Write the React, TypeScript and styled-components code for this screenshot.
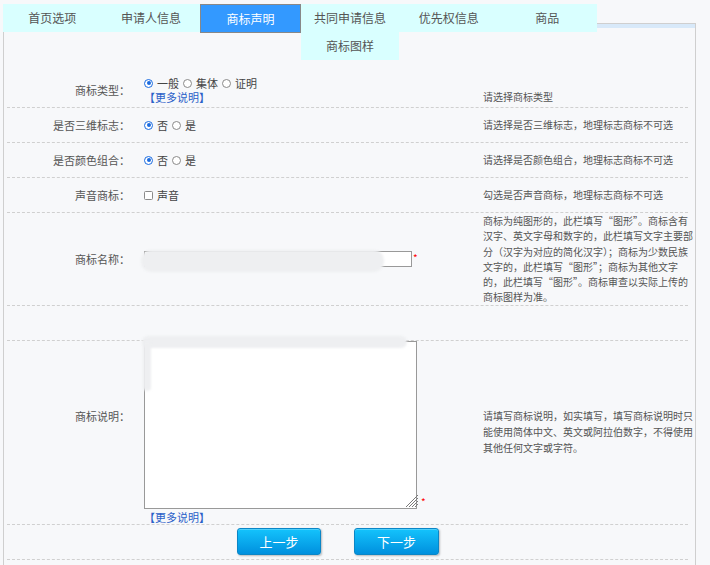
import React from 'react';
import styled, { createGlobalStyle, css } from 'styled-components';

const GlobalStyle = createGlobalStyle`
  html, body { margin: 0; padding: 0; background: #f7f8fa; }
  body { font-family: "Noto Sans CJK SC", "Noto Sans", sans-serif; color: #555; }
  * { box-sizing: border-box; }
`;

const Page = styled.div`
  padding: 4px 0 0 3px;
  width: 710px;
  height: 565px;
  overflow: hidden;
`;

const TabBar = styled.ul`
  list-style: none;
  margin: 0;
  padding: 0;
  width: 594px;
  height: 19px;
  position: relative;
  z-index: 2;
`;

const Tab = styled.li<{ $active?: boolean }>`
  float: left;
  width: 98.6px;
  height: 28px;
  line-height: 28px;
  text-align: center;
  font-size: 12px;
  color: #555;
  background: #d9ffff;
  ${p =>
    p.$active &&
    css`
      box-sizing: content-box;
      height: 27px;
      line-height: 27px;
      border: 1px solid #888;
      background: #3399ff;
      color: #fff;
    `}
`;

const Panel = styled.div`
  width: 693px;
  min-height: 560px;
  border: 1px solid #cfcfcf;
  box-shadow: inset 0 4px 0 #d8e9f9;
  background: #f7f8fa;
  padding: 49px 0 0 3px;
`;

const Row = styled.div`
  width: 681px;
  display: grid;
  grid-template-columns: 130px 332px 205px;
  column-gap: 7px;
  min-height: 35px;
  align-items: center;
  border-bottom: 1px dashed #d0d0d0;
`;

const Label = styled.div<{ $top?: number }>`
  text-align: right;
  padding-right: 7px;
  font-size: 11px;
  line-height: 14px;
  color: #555;
  ${p =>
    p.$top !== undefined &&
    css`
      align-self: start;
      margin-top: ${p.$top}px;
    `}
`;

const Control = styled.div<{ $top?: boolean }>`
  display: flex;
  flex-direction: column;
  align-items: flex-start;
  font-size: 11px;
  line-height: 14px;
  color: #444;
  ${p =>
    p.$top &&
    css`
      align-self: start;
    `}
`;

const Hint = styled.div<{ $lh?: number; $bottom?: boolean }>`
  width: 211px;
  font-size: 10px;
  line-height: ${p => p.$lh ?? 16}px;
  color: #555;
  ${p =>
    p.$bottom &&
    css`
      align-self: end;
      padding-bottom: 3px;
      line-height: 14px;
    `}
`;

const Choices = styled.div`
  display: flex;
  align-items: center;
  height: 14px;
`;

const Choice = styled.label`
  display: inline-flex;
  align-items: center;
  margin-right: 4px;
`;

const Radio = styled.span<{ $checked?: boolean }>`
  display: inline-block;
  position: relative;
  width: 9px;
  height: 9px;
  margin-right: 4px;
  border-radius: 50%;
  border: 1px solid ${p => (p.$checked ? '#1a6be0' : '#8a8a8a')};
  background: #fff;
  ${p =>
    p.$checked &&
    css`
      &::after {
        content: '';
        position: absolute;
        inset: 1.5px;
        border-radius: 50%;
        background: #1a6be0;
      }
    `}
`;

const Check = styled.span`
  display: inline-block;
  width: 9px;
  height: 9px;
  margin-right: 4px;
  border: 1px solid #8a8a8a;
  border-radius: 1.5px;
  background: #fff;
`;

const MoreLink = styled.a<{ $gap?: number }>`
  display: block;
  margin-top: ${p => p.$gap ?? 0}px;
  font-size: 11px;
  line-height: 13px;
  color: #2a60c8;
  text-decoration: none;
`;

const Field = styled.div`
  position: relative;
  display: inline-flex;
  align-items: flex-start;
`;

const TextInput = styled.input`
  width: 268px;
  height: 16px;
  margin: 0;
  padding: 0 2px;
  border: 1px solid #999;
  background: #fff;
  font: inherit;
`;

const TextArea = styled.textarea`
  display: block;
  width: 273px;
  height: 168px;
  margin: 0;
  padding: 2px;
  border: 1px solid #999;
  background: #fff;
  resize: none;
  font: inherit;
`;

const AreaField = styled.div`
  position: relative;
  display: inline-flex;
  align-items: flex-end;
`;

const Star = styled.span<{ $gap?: number }>`
  margin-left: ${p => p.$gap ?? 1}px;
  font-size: 10px;
  line-height: 14px;
  color: #f00;
`;

const Smudge = styled.div<{ $l: number; $t: number; $w: number; $h: number; $r: number }>`
  position: absolute;
  left: ${p => p.$l}px;
  top: ${p => p.$t}px;
  width: ${p => p.$w}px;
  height: ${p => p.$h}px;
  border-radius: ${p => p.$r}px;
  background: #eeeff1;
  filter: blur(1.2px);
  pointer-events: none;
`;

const Grip = styled.svg`
  position: absolute;
  right: 7px;
  bottom: 1px;
`;

const ButtonRow = styled.div`
  width: 681px;
  min-height: 35px;
  display: flex;
  align-items: center;
  gap: 33px;
  padding-left: 230px;
  border-bottom: 1px dashed #d0d0d0;
`;

const StepButton = styled.button<{ $w: number }>`
  width: ${p => p.$w}px;
  height: 27px;
  padding: 0;
  border: 1px solid #0b86c6;
  border-radius: 3px;
  background: linear-gradient(#14c3fc, #0090de);
  box-shadow: 1px 1px 2px rgba(0, 0, 0, 0.25), inset 0 1px 0 rgba(255, 255, 255, 0.25);
  color: #fff;
  font-family: inherit;
  font-size: 13px;
  cursor: pointer;
`;

const tabs = ['首页选项', '申请人信息', '商标声明', '共同申请信息', '优先权信息', '商品', '商标图样'];

function RadioGroup({ options, checked }: { options: string[]; checked: number }) {
  return (
    <Choices>
      {options.map((o, i) => (
        <Choice key={o}>
          <Radio $checked={i === checked} />
          {o}
        </Choice>
      ))}
    </Choices>
  );
}

export default function App() {
  return (
    <>
      <GlobalStyle />
      <Page>
        <TabBar>
          {tabs.map(t => (
            <Tab key={t} $active={t === '商标声明'}>
              {t}
            </Tab>
          ))}
        </TabBar>
        <Panel>
          <Row>
            <Label>商标类型：</Label>
            <Control>
              <RadioGroup options={['一般', '集体', '证明']} checked={0} />
              <MoreLink href="#" $gap={1}>【更多说明】</MoreLink>
            </Control>
            <Hint $bottom>请选择商标类型</Hint>
          </Row>
          <Row>
            <Label>是否三维标志：</Label>
            <Control>
              <RadioGroup options={['否', '是']} checked={0} />
            </Control>
            <Hint>请选择是否三维标志，地理标志商标不可选</Hint>
          </Row>
          <Row>
            <Label>是否颜色组合：</Label>
            <Control>
              <RadioGroup options={['否', '是']} checked={0} />
            </Control>
            <Hint>请选择是否颜色组合，地理标志商标不可选</Hint>
          </Row>
          <Row>
            <Label>声音商标：</Label>
            <Control>
              <Choices>
                <Choice>
                  <Check />
                  声音
                </Choice>
              </Choices>
            </Control>
            <Hint>勾选是否声音商标，地理标志商标不可选</Hint>
          </Row>
          <Row>
            <Label>商标名称：</Label>
            <Control>
              <Field>
                <TextInput />
                <Star>*</Star>
                <Smudge $l={-3} $t={-1} $w={243} $h={22} $r={10} />
              </Field>
            </Control>
            <Hint $lh={15.3}>
              商标为纯图形的，此栏填写“图形”。商标含有汉字、英文字母和数字的，此栏填写文字主要部分（汉字为对应的简化汉字）；商标为少数民族文字的，此栏填写“图形”；商标为其他文字的，此栏填写“图形”。商标审查以实际上传的商标图样为准。
            </Hint>
          </Row>
          <Row />
          <Row>
            <Label $top={68}>商标说明：</Label>
            <Control $top>
              <AreaField>
                <TextArea />
                <Star $gap={4}>*</Star>
                <Grip width="14" height="14" viewBox="0 0 14 14">
                  <g stroke="#7a7a7a" strokeWidth="1">
                    <line x1="13" y1="1" x2="1" y2="13" />
                    <line x1="13" y1="4" x2="4" y2="13" />
                    <line x1="13" y1="7" x2="7" y2="13" />
                    <line x1="13" y1="10" x2="10" y2="13" />
                  </g>
                </Grip>
                <Smudge $l={-2} $t={-5} $w={265} $h={12} $r={6} />
                <Smudge $l={-1} $t={0} $w={8} $h={50} $r={4} />
              </AreaField>
              <MoreLink href="#" $gap={2}>
                【更多说明】
              </MoreLink>
            </Control>
            <Hint>请填写商标说明，如实填写，填写商标说明时只能使用简体中文、英文或阿拉伯数字，不得使用其他任何文字或字符。</Hint>
          </Row>
          <ButtonRow>
            <StepButton $w={84}>上一步</StepButton>
            <StepButton $w={85}>下一步</StepButton>
          </ButtonRow>
        </Panel>
      </Page>
    </>
  );
}
